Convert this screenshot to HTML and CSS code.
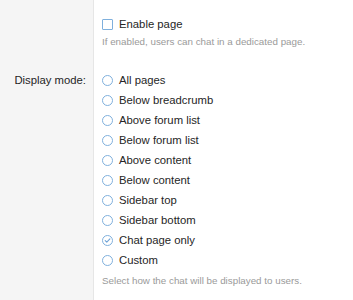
FILE: index.html
```html
<!DOCTYPE html>
<html lang="en">
<head>
    <meta charset="UTF-8">
    <meta name="viewport" content="width=device-width, initial-scale=1.0">
    <title>Chat options</title>
    <link rel="stylesheet" href="styles.css">
</head>
<body>
    <div class="options">
        <div class="option-row first">
            <div class="option-label"></div>
            <div class="option-field">
                <label class="choice">
                    <span class="box"></span>
                    <span>Enable page</span>
                </label>
                <p class="hint">If enabled, users can chat in a dedicated page.</p>
            </div>
        </div>

        <div class="option-row last">
            <div class="option-label">Display mode:</div>
            <div class="option-field">
                <label class="choice"><span class="radio"></span><span>All pages</span></label>
                <label class="choice"><span class="radio"></span><span>Below breadcrumb</span></label>
                <label class="choice"><span class="radio"></span><span>Above forum list</span></label>
                <label class="choice"><span class="radio"></span><span>Below forum list</span></label>
                <label class="choice"><span class="radio"></span><span>Above content</span></label>
                <label class="choice"><span class="radio"></span><span>Below content</span></label>
                <label class="choice"><span class="radio"></span><span>Sidebar top</span></label>
                <label class="choice"><span class="radio"></span><span>Sidebar bottom</span></label>
                <label class="choice">
                    <span class="radio checked">
                        <svg viewBox="0 0 11 11" width="11" height="11"><path d="M3.2 5.6 L4.8 7.1 L7.9 3.9" fill="none" stroke="#6fa3d6" stroke-width="1.1" stroke-linecap="round" stroke-linejoin="round"/></svg>
                    </span>
                    <span>Chat page only</span>
                </label>
                <label class="choice"><span class="radio"></span><span>Custom</span></label>
                <p class="hint bottom">Select how the chat will be displayed to users.</p>
            </div>
        </div>
    </div>
</body>
</html>
```

FILE: styles.css
```css
body {
    margin: 0;
    padding: 0;
    background: #fff;
    font-family: "Liberation Sans", Arial, sans-serif;
    color: #262626;
}
.options {
    min-height: 100vh;
    display: flex;
    flex-direction: column;
}
.option-row {
    display: flex;
}
.option-row.last {
    flex: 1;
}
.option-label {
    width: 86px;
    flex: none;
    padding-right: 7px;
    background: #f5f5f5;
    border-right: 1px solid #e6e6e6;
    text-align: right;
    font-size: 11.3px;
    line-height: 20px;
}
.option-row.first .option-field {
    padding-top: 14px;
    padding-bottom: 21px;
}
.option-field {
    padding-left: 8px;
}
.choice {
    display: flex;
    align-items: center;
    height: 20px;
    font-size: 11.3px;
}
.box {
    width: 9px;
    height: 9px;
    border: 1px solid #7fb0dd;
    border-radius: 1px;
    margin-right: 6px;
}
.radio {
    width: 9px;
    height: 9px;
    border: 1px solid #7fb0dd;
    border-radius: 50%;
    margin-right: 6px;
    position: relative;
}
.radio svg {
    position: absolute;
    top: -1px;
    left: -1px;
}
.hint {
    margin: 1px 0 0;
    font-size: 9.8px;
    line-height: 14px;
    color: #9a9a9a;
}
.hint.bottom {
    margin-top: 4px;
}
```
